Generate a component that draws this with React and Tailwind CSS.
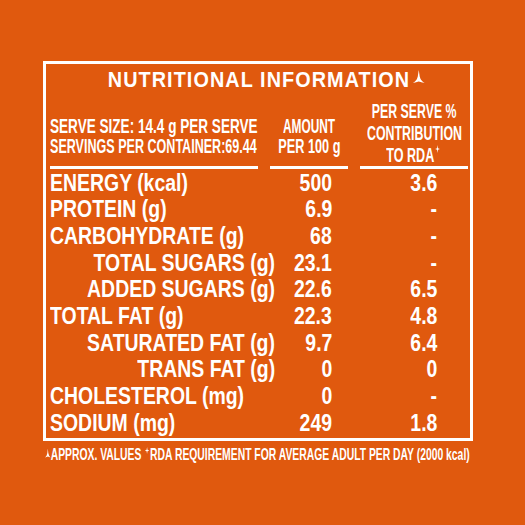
const rows = [
  { label: "ENERGY (kcal)", amt: "500", rda: "3.6" },
  { label: "PROTEIN (g)", amt: "6.9", rda: "-" },
  { label: "CARBOHYDRATE (g)", amt: "68", rda: "-" },
  { label: "TOTAL SUGARS (g)", amt: "23.1", rda: "-", sub: true },
  { label: "ADDED SUGARS (g)", amt: "22.6", rda: "6.5", sub: true },
  { label: "TOTAL FAT (g)", amt: "22.3", rda: "4.8" },
  { label: "SATURATED FAT (g)", amt: "9.7", rda: "6.4", sub: true },
  { label: "TRANS FAT (g)", amt: "0", rda: "0", sub: true },
  { label: "CHOLESTEROL (mg)", amt: "0", rda: "-" },
  { label: "SODIUM (mg)", amt: "249", rda: "1.8" },
];

function Star({ className }) {
  return (
    <svg viewBox="0 0 10 10" className={className} fill="currentColor">
      <path d="M5 0L6 4L10 5L6 6L5 10L4 6L0 5L4 4Z" />
    </svg>
  );
}

function Spike({ className }) {
  return (
    <svg viewBox="0 0 12 12" className={className} fill="currentColor">
      <path d="M6 0L7 6Q8 10 12 12Q8.5 11.2 6 10.5Q3.5 11.2 0 12Q4 10 5 6Z" />
    </svg>
  );
}

export default function App() {
  return (
    <div className="w-[525px] h-[525px] overflow-hidden bg-[#e0590e] text-white font-bold font-['Liberation_Sans',Arial,sans-serif]">
      <div className="pt-[61px] pl-[43px]">
        {/* Panel */}
        <div className="w-[430px] h-[380px] border-[3px] border-white pl-[4px] pr-[2px] pt-[4px]">
          <div className="text-center">
            <span className="relative inline-block whitespace-nowrap scale-x-[0.9] text-[22px] leading-[24px] tracking-[1.2px]">
              NUTRITIONAL INFORMATION
              <Spike className="absolute left-full top-[2px] w-[19px] h-[13px]" />
            </span>
          </div>

          {/* Column headings */}
          <div className="mt-[5.5px] grid grid-cols-[208px_78px_108px] gap-x-[12px] items-end text-[21px]">
            <div className="border-b-[3px] border-white pb-[10px] leading-[20px]">
              <span className="block origin-left scale-x-[0.646] whitespace-nowrap">SERVE SIZE: 14.4 g PER SERVE</span>
              <span className="block origin-left scale-x-[0.598] whitespace-nowrap">SERVINGS PER CONTAINER:69.44</span>
            </div>
            <div className="border-b-[3px] border-white pb-[10px] leading-[20px]">
              <div className="flex justify-center">
                <span className="shrink-0 whitespace-nowrap scale-x-[0.565]">AMOUNT</span>
              </div>
              <div className="flex justify-center">
                <span className="shrink-0 whitespace-nowrap scale-x-[0.604]">PER 100 g</span>
              </div>
            </div>
            <div className="border-b-[3px] border-white leading-[22px]">
              <div className="flex justify-center">
                <span className="shrink-0 whitespace-nowrap scale-x-[0.587]">PER SERVE %</span>
              </div>
              <div className="flex justify-center">
                <span className="shrink-0 whitespace-nowrap scale-x-[0.59]">CONTRIBUTION</span>
              </div>
              <div className="flex justify-center">
                <span className="shrink-0 whitespace-nowrap scale-x-[0.6]">
                  TO RDA
                  <Star className="inline-block w-[11px] h-[8px] align-[9px]" />
                </span>
              </div>
            </div>
          </div>

          {/* Nutrient rows */}
          <div className="mt-[1px] text-[24px] leading-[26.67px]">
            {rows.map((r) => (
              <div key={r.label} className="grid grid-cols-[225px_57px_105px]">
                <div className={r.sub ? "flex justify-end" : "flex justify-start"}>
                  <span
                    className={
                      r.sub
                        ? "shrink-0 whitespace-nowrap origin-right scale-x-[0.81]"
                        : "shrink-0 whitespace-nowrap origin-left scale-x-[0.81]"
                    }
                  >
                    {r.label}
                  </span>
                </div>
                <div className="flex justify-end">
                  <span className="shrink-0 origin-right scale-x-[0.81]">{r.amt}</span>
                </div>
                <div className="flex justify-end">
                  <span className="shrink-0 origin-right scale-x-[0.81]">{r.rda}</span>
                </div>
              </div>
            ))}
          </div>
        </div>

        {/* Footnote */}
        <div className="pl-[2px] mt-[3px] text-[16.5px] leading-[20px]">
          <span className="block origin-left scale-x-[0.628] whitespace-nowrap">
            <Spike className="inline-block w-[9px] h-[10px] align-[2px]" />
            APPROX. VALUES <Star className="inline-block w-[9px] h-[7px] align-[6px]" />RDA REQUIREMENT FOR AVERAGE ADULT PER DAY (2000 kcal)
          </span>
        </div>
      </div>
    </div>
  );
}
